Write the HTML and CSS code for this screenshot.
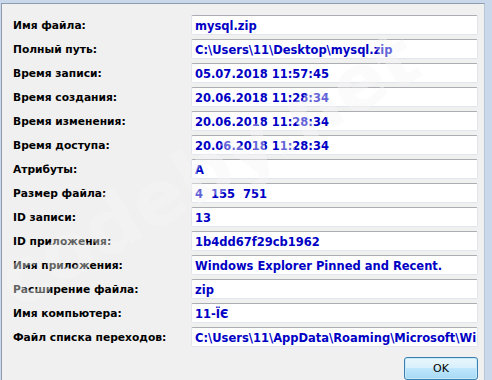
FILE: index.html
```html
<!DOCTYPE html>
<html lang="ru">
<head>
<meta charset="utf-8">
<link rel="stylesheet" href="styles.css">
</head>
<body>
<div class="dialog">
  <div class="grid">
    <div class="label">Имя файла:</div><div class="field">mysql.zip</div>
    <div class="label">Полный путь:</div><div class="field">C:\Users\11\Desktop\mysql.zip</div>
    <div class="label">Время записи:</div><div class="field">05.07.2018 11:57:45</div>
    <div class="label">Время создания:</div><div class="field">20.06.2018 11:28:34</div>
    <div class="label">Время изменения:</div><div class="field">20.06.2018 11:28:34</div>
    <div class="label">Время доступа:</div><div class="field">20.06.2018 11:28:34</div>
    <div class="label">Атрибуты:</div><div class="field">A</div>
    <div class="label">Размер файла:</div><div class="field">4&nbsp;&nbsp;155&nbsp;&nbsp;751</div>
    <div class="label">ID записи:</div><div class="field">13</div>
    <div class="label">ID приложения:</div><div class="field">1b4dd67f29cb1962</div>
    <div class="label">Имя приложения:</div><div class="field">Windows Explorer Pinned and Recent.</div>
    <div class="label">Расширение файла:</div><div class="field">zip</div>
    <div class="label">Имя компьютера:</div><div class="field">11-ÏЄ</div>
    <div class="label">Файл списка переходов:</div><div class="field">C:\Users\11\AppData\Roaming\Microsoft\Windows\Recent</div>
  </div>
  <div class="actions">
    <button class="btn">OK</button>
  </div>
  <div class="watermark">codeby.net</div>
</div>
</body>
</html>
```
FILE: styles.css
```css
html, body {
  margin: 0;
  padding: 0;
}
body {
  background: #c9d8ea;
  width: 492px;
  height: 380px;
  overflow: hidden;
}
.dialog {
  position: relative;
  margin: 3px 0 0 1px;
  width: 484px;
  height: 380px;
  box-sizing: border-box;
  background: #f0f0f0;
  border-top: 1px solid #8e9cae;
  border-left: 1px solid #8e9cae;
  border-right: 1px solid #b9c6d6;
  padding: 11px 0 0 11px;
  overflow: hidden;
}
.grid {
  display: grid;
  grid-template-columns: 178px 287px;
  grid-auto-rows: 20px;
  row-gap: 4px;
}
.label {
  font-family: "DejaVu Sans", sans-serif;
  font-weight: bold;
  font-size: 10.7px;
  color: #000;
  line-height: 20px;
  white-space: nowrap;
  padding-top: 1px;
}
.field {
  background: #fff;
  border: 1px solid #e2e6eb;
  border-top-color: #abadb3;
  border-radius: 2px;
  box-sizing: border-box;
  font-family: "DejaVu Sans", sans-serif;
  font-weight: bold;
  font-size: 11.5px;
  color: #0000c4;
  line-height: 18px;
  padding: 1px 0 0 3px;
  white-space: nowrap;
  overflow: hidden;
}
.actions {
  display: flex;
  justify-content: flex-end;
  width: 465px;
  margin-top: 10px;
}
.btn {
  width: 74px;
  height: 23px;
  border: 1px solid #3c7fb1;
  border-radius: 3px;
  background: linear-gradient(#eaf6fd 0%, #d9f0fc 45%, #bee6fd 50%, #a7d9f5 100%);
  box-shadow: inset 0 0 0 1px #c7eafb;
  font-family: "DejaVu Sans", sans-serif;
  font-size: 11px;
  color: #000;
  padding: 0;
}
.watermark {
  position: absolute;
  left: 22px;
  top: 238px;
  font-family: "DejaVu Sans", sans-serif;
  font-weight: bold;
  font-size: 76px;
  line-height: 80px;
  color: #f7f7f7;
  opacity: 0.4;
  transform: rotate(-30deg);
  transform-origin: 0 100%;
  pointer-events: none;
  white-space: nowrap;
}
```
